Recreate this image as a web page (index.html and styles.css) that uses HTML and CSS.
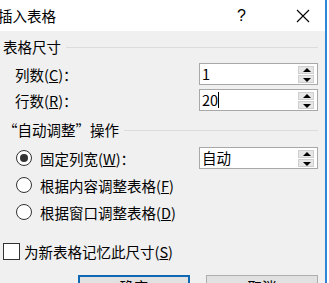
FILE: index.html
```html
<!DOCTYPE html>
<html lang="zh-CN">
<head>
    <meta charset="UTF-8">
    <title>插入表格</title>
    <link rel="stylesheet" href="styles.css">
</head>
<body>

<div class="window">
    <div class="titlebar">
        <span class="title">插入表格</span>
        <span class="help">?</span>
        <span class="close">
            <svg width="14" height="14" viewBox="0 0 14 14"><path d="M1 1L13 13M13 1L1 13" stroke="#000" stroke-width="1.1" fill="none"/></svg>
        </span>
    </div>

    <div class="content">
        <div class="group-head"><span>表格尺寸</span><div class="rule"></div></div>

        <div class="row indent first">
            <span class="label">列数(<u>C</u>)：</span>
            <div class="spin"><span class="value">1</span><div class="spin-btns"><i class="up"></i><i class="down"></i></div></div>
        </div>
        <div class="row indent">
            <span class="label">行数(<u>R</u>)：</span>
            <div class="spin"><span class="value">20<b class="caret"></b></span><div class="spin-btns"><i class="up"></i><i class="down"></i></div></div>
        </div>

        <div class="group-head second"><span>“自动调整”操作</span><div class="rule"></div></div>

        <div class="row radio-row first-radio">
            <span class="radio checked"></span>
            <span class="label">固定列宽(<u>W</u>)：</span>
            <div class="spin"><span class="value">自动</span><div class="spin-btns"><i class="up"></i><i class="down"></i></div></div>
        </div>
        <div class="row radio-row">
            <span class="radio"></span>
            <span class="label">根据内容调整表格(<u>F</u>)</span>
        </div>
        <div class="row radio-row">
            <span class="radio"></span>
            <span class="label">根据窗口调整表格(<u>D</u>)</span>
        </div>

        <div class="check-row">
            <span class="checkbox"></span>
            <span>为新表格记忆此尺寸(<u>S</u>)</span>
        </div>

        <div class="buttons">
            <button class="btn default">确定</button>
            <button class="btn">取消</button>
        </div>
    </div>
</div>

</body>
</html>
```

FILE: styles.css
```css
html {
    background: #ffffff;
}

body {
    margin: 0;
    width: 329px;
    height: 283px;
    overflow: hidden;
    font-family: "Noto Sans CJK SC", "Microsoft YaHei", sans-serif;
    font-size: 14.5px;
    color: #000000;
}

.window {
    width: 325px;
    height: 283px;
    border-right: 2px solid #2f86d6;
    display: flex;
    flex-direction: column;
    overflow: hidden;
}

.titlebar {
    height: 31px;
    flex: none;
    background: #ffffff;
    display: flex;
    align-items: center;
}

.title {
    margin-left: -2px;
    line-height: 20px;
}

.help {
    margin-left: 181px;
    font-family: "Liberation Sans", sans-serif;
    font-size: 16px;
}

.close {
    margin-left: 50px;
    display: flex;
}

.content {
    flex: 1;
    background: #f0f0f0;
    padding: 7px 7px 0 3px;
}

.group-head {
    display: flex;
    align-items: center;
    height: 18px;
    line-height: 18px;
}

.group-head.second {
    margin-top: 10px;
}

.rule {
    flex: 1;
    height: 1px;
    background: #dcdcdc;
    margin-left: 5px;
}

.row {
    display: flex;
    align-items: center;
    height: 22px;
}

.row.indent {
    padding-left: 12px;
    margin-top: 4px;
}

.row.indent.first {
    margin-top: 7px;
}

.label {
    flex: 1;
    white-space: nowrap;
}

.spin {
    width: 117px;
    height: 20px;
    border: 1px solid #a8a8a8;
    background: #ffffff;
    display: flex;
    align-items: center;
}

.value {
    flex: 1;
    padding-left: 2px;
    line-height: 20px;
    display: flex;
    align-items: center;
}

.caret {
    width: 1px;
    height: 16px;
    background: #000000;
}

.spin-btns {
    width: 16px;
    height: 17px;
    margin-right: 3px;
    display: flex;
    flex-direction: column;
    gap: 1px;
}

.spin-btns i {
    flex: 1;
    background: #e6e6e6;
    border: 1px solid #cfcfcf;
    position: relative;
}

.spin-btns i::after {
    content: "";
    position: absolute;
    left: 4px;
    border-left: 4px solid transparent;
    border-right: 4px solid transparent;
}

.spin-btns .up::after {
    top: 1px;
    border-bottom: 4px solid #000000;
}

.spin-btns .down::after {
    top: 2px;
    border-top: 4px solid #000000;
}

.radio-row {
    padding-left: 13px;
    margin-top: 5px;
}

.radio-row.first-radio {
    margin-top: 8px;
}

.radio {
    width: 14px;
    height: 14px;
    border: 1px solid #333333;
    border-radius: 50%;
    background: #ffffff;
    margin-right: 8px;
    position: relative;
    flex: none;
}

.radio.checked::after {
    content: "";
    position: absolute;
    left: 3px;
    top: 3px;
    width: 8px;
    height: 8px;
    border-radius: 50%;
    background: #333333;
}

.check-row {
    display: flex;
    align-items: center;
    height: 20px;
    margin-top: 18px;
    white-space: nowrap;
}

.checkbox {
    width: 15px;
    height: 15px;
    border: 1px solid #333333;
    background: #ffffff;
    margin-right: 4px;
    flex: none;
}

.buttons {
    display: flex;
    justify-content: flex-end;
    gap: 16px;
    margin-top: 14px;
}

.btn {
    width: 112px;
    height: 23px;
    background: #e1e1e1;
    border: 1px solid #adadad;
    font-family: inherit;
    font-size: 14.5px;
    line-height: 18px;
    padding: 0;
    color: #000000;
}

.btn.default {
    border: 2px solid #0f68b4;
}
```
